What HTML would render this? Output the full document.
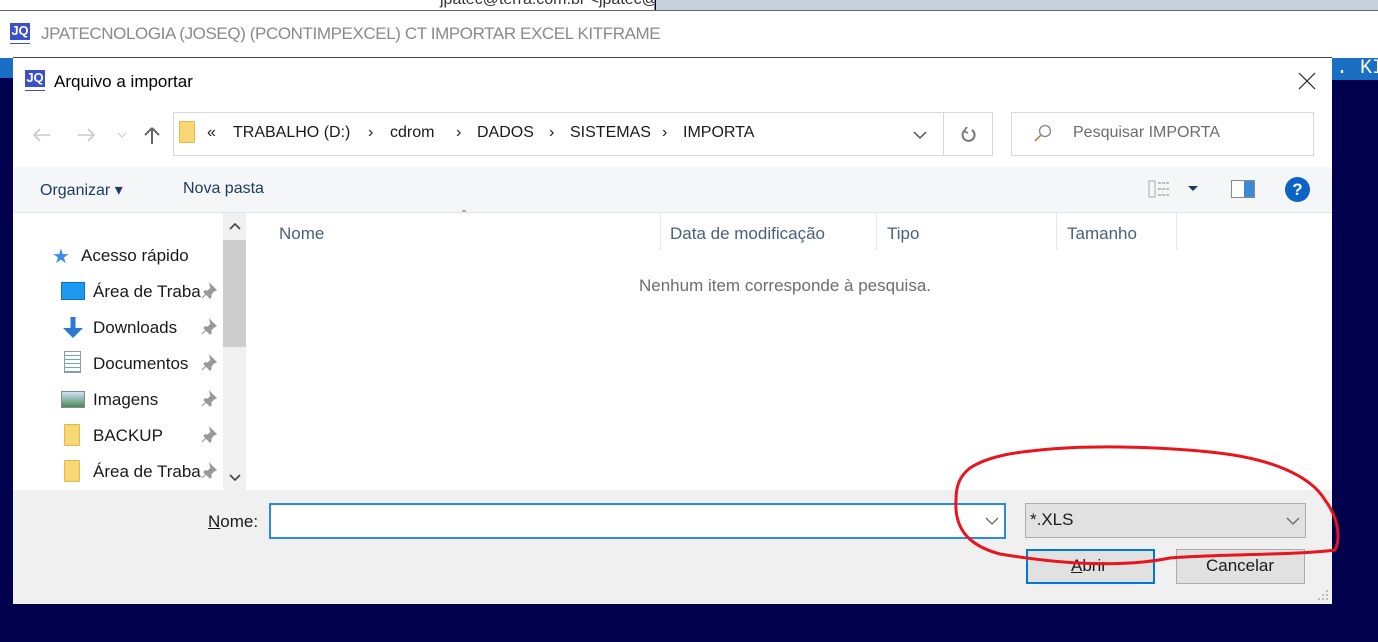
<!DOCTYPE html>
<html><head><meta charset="utf-8"><style>
*{margin:0;padding:0;box-sizing:border-box}
body{width:1378px;height:642px;overflow:hidden;background:#00004c;font-family:"Liberation Sans",sans-serif;position:relative;color:#000}
.a{position:absolute;white-space:nowrap}
.t{font-size:17px;color:#1a1a1a}
.b{position:absolute;top:124px;font-size:16px;color:#1a1a1a;white-space:nowrap}
.logo{position:absolute;width:20px;height:20px;background:#3b4fc8;color:#fff;font:bold 13px "Liberation Sans";text-align:center;line-height:16px;border-bottom:3px solid #fff;box-shadow:0 1px 0 #3b4fc8}
.fold{position:absolute;width:16px;height:22px;background:#f8d775;border:1px solid #e0b850;border-radius:1px}
</style></head><body>
<div class="a" style="left:0;top:0;width:655px;height:12px;background:#fff;border-right:1px solid #888;overflow:hidden"><div class="a" style="left:440px;top:-9px;font-size:16px;color:#333">jpatec@terra.com.br &lt;jpatec@terra.com.br&gt;</div></div>
<div class="a" style="left:656px;top:0;width:722px;height:10px;background:#c4d0dc"></div>
<div class="a" style="left:0;top:10px;width:1378px;height:48px;background:#fff;border-top:1px solid #666"></div>
<div class="logo" style="left:10px;top:23px">JQ</div>
<div class="a" style="left:41px;top:24px;font-size:17px;color:#8a8a8a;letter-spacing:-0.4px">JPATECNOLOGIA (JOSEQ) (PCONTIMPEXCEL) CT IMPORTAR EXCEL KITFRAME</div>
<div class="a" style="left:0;top:58px;width:13px;height:20px;background:#1a6fc4"></div>
<div class="a" style="left:1332px;top:58px;width:46px;height:22px;background:#1a6fc4;color:#fff;font:20px 'Liberation Mono';padding-left:4px;line-height:22px">. KI</div>
<div class="a" style="left:13px;top:57px;width:1319px;height:547px;background:#fff;border-top:1px solid #444"></div>
<div class="logo" style="left:25px;top:70px">JQ</div>
<div class="a t" style="left:54px;top:72px;color:#000">Arquivo a importar</div>
<svg class="a" style="left:1298px;top:72px" width="18" height="18"><path d="M1 1L17 17M17 1L1 17" stroke="#222" stroke-width="1.2"/></svg>
<svg class="a" style="left:30px;top:124px" width="140" height="22"><path d="M4 11h16M4 11l6-6M4 11l6 6" stroke="#c8c8c8" stroke-width="1.6" fill="none"/><path d="M48 11h16M64 11l-6-6M64 11l-6 6" stroke="#c8c8c8" stroke-width="1.6" fill="none"/><path d="M88 9l4 4 4-4" stroke="#c8c8c8" fill="none"/><path d="M122 4v16M122 4l-7 7M122 4l7 7" stroke="#666" stroke-width="2" fill="none"/></svg>
<div class="a" style="left:173px;top:112px;width:820px;height:44px;border:1px solid #d9d9d9"></div>
<div class="a" style="left:943px;top:112px;width:1px;height:44px;background:#d9d9d9"></div>
<div class="fold" style="left:179px;top:121px"></div>
<div class="b" style="left:207px">«</div>
<div class="b" style="left:233px">TRABALHO (D:)</div>
<div class="b" style="left:368px">›</div>
<div class="b" style="left:390px">cdrom</div>
<div class="b" style="left:456px">›</div>
<div class="b" style="left:477px">DADOS</div>
<div class="b" style="left:549px">›</div>
<div class="b" style="left:570px">SISTEMAS</div>
<div class="b" style="left:662px">›</div>
<div class="b" style="left:683px">IMPORTA</div>
<svg class="a" style="left:911px;top:128px" width="18" height="14"><path d="M3 4l6 6 6-6" stroke="#555" stroke-width="1.5" fill="none"/></svg>
<svg class="a" style="left:958px;top:124px" width="20" height="22"><path d="M14 6A6 6 0 1 1 6 7" stroke="#777" stroke-width="2" fill="none"/><path d="M9 3l-3 4 4 2" stroke="#777" stroke-width="1.8" fill="none"/></svg>
<div class="a" style="left:1011px;top:112px;width:303px;height:44px;border:1px solid #d9d9d9"></div>
<svg class="a" style="left:1032px;top:123px" width="22" height="22"><circle cx="13" cy="8" r="5.5" stroke="#888" stroke-width="1.3" fill="none"/><path d="M9 12l-6 6" stroke="#c08040" stroke-width="1.6"/></svg>
<div class="a" style="left:1073px;top:124px;font-size:16px;color:#6d6d6d">Pesquisar IMPORTA</div>
<div class="a" style="left:13px;top:167px;width:1319px;height:46px;background:#f5f6f7;border-bottom:1px solid #e5e5e5"></div>
<div class="a" style="left:40px;top:180px;font-size:16px;color:#1e3a5f">Organizar &#9662;</div>
<div class="a" style="left:183px;top:180px;font-size:16px;color:#1e3a5f">Nova pasta</div>
<svg class="a" style="left:1148px;top:179px" width="60" height="20"><rect x="1" y="2" width="6" height="16" fill="none" stroke="#aaa"/><path d="M10 4h12M10 10h12M10 16h12" stroke="#888" stroke-dasharray="3 1"/><path d="M40 7l5 5 5-5z" fill="#1e3a5f"/></svg>
<div class="a" style="left:1231px;top:180px;width:24px;height:18px;border:1px solid #888;background:linear-gradient(90deg,#fff 55%,#3a8ad8 55%)"></div>
<div class="a" style="left:1285px;top:177px;width:25px;height:25px;border-radius:50%;background:#0b63c4;color:#fff;font:bold 17px 'Liberation Sans';text-align:center;line-height:25px">?</div>
<div class="a" style="left:223px;top:213px;width:23px;height:277px;background:#f0f0f0"></div>
<div class="a" style="left:223px;top:240px;width:23px;height:107px;background:#cdcdcd"></div>
<svg class="a" style="left:228px;top:220px" width="14" height="12"><path d="M2 9l5-5 5 5" stroke="#444" stroke-width="1.6" fill="none"/></svg>
<svg class="a" style="left:228px;top:472px" width="14" height="12"><path d="M2 3l5 5 5-5" stroke="#444" stroke-width="1.6" fill="none"/></svg>
<div class="a" style="left:52px;top:244px;color:#3a8ee6;font-size:20px">★</div>
<div class="a t" style="left:81px;top:246px">Acesso rápido</div>
<div class="a" style="left:61px;top:282px;width:24px;height:18px;background:#1b9af0;border:1px solid #1070c0"></div>
<div class="a t" style="left:93px;top:282px">Área de Traba</div>
<svg class="a" style="left:61px;top:316px" width="24" height="24"><path d="M12 1v14" stroke="#2a78d0" stroke-width="5"/><path d="M2 12l10 10 10-10z" fill="#2a78d0"/></svg>
<div class="a t" style="left:93px;top:318px">Downloads</div>
<div class="a" style="left:64px;top:351px;width:17px;height:22px;border:1px solid #999;background-image:repeating-linear-gradient(#fff 0 3px,#6ab 3px 4px)"></div>
<div class="a t" style="left:93px;top:354px">Documentos</div>
<div class="a" style="left:61px;top:391px;width:24px;height:17px;border:1px solid #888;background:linear-gradient(#cfe3f5,#4a8a5a)"></div>
<div class="a t" style="left:93px;top:390px">Imagens</div>
<div class="fold" style="left:64px;top:424px"></div>
<div class="a t" style="left:93px;top:426px">BACKUP</div>
<div class="fold" style="left:64px;top:460px"></div>
<div class="a t" style="left:93px;top:462px">Área de Traba</div>
<svg class="a" style="left:200px;top:282px" width="18" height="200">
<g fill="#999" stroke="#999">
<path id="p" d="M10 2l6 6-2 1-3 3v3l-1 1-6-6 1-1h3l3-3zM6 12l-4 4" stroke-width="1.2"/>
<use href="#p" y="36"/><use href="#p" y="72"/><use href="#p" y="108"/><use href="#p" y="144"/><use href="#p" y="180"/>
</g></svg>
<div class="a" style="left:462px;top:207px;font-size:14px;color:#777">&#710;</div>
<div class="a t" style="left:279px;top:224px;color:#4c607a">Nome</div>
<div class="a" style="left:660px;top:213px;width:1px;height:37px;background:#e5e5e5"></div>
<div class="a t" style="left:670px;top:224px;color:#4c607a">Data de modificação</div>
<div class="a" style="left:876px;top:213px;width:1px;height:37px;background:#e5e5e5"></div>
<div class="a t" style="left:887px;top:224px;color:#4c607a">Tipo</div>
<div class="a" style="left:1056px;top:213px;width:1px;height:37px;background:#e5e5e5"></div>
<div class="a t" style="left:1067px;top:224px;color:#4c607a">Tamanho</div>
<div class="a" style="left:1176px;top:213px;width:1px;height:37px;background:#e5e5e5"></div>
<div class="a t" style="left:639px;top:276px;color:#6d6d6d">Nenhum item corresponde à pesquisa.</div>
<div class="a" style="left:13px;top:490px;width:1319px;height:114px;background:#f0f0f0"></div>
<div class="a t" style="left:208px;top:512px"><u>N</u>ome:</div>
<div class="a" style="left:269px;top:503px;width:737px;height:36px;background:#fff;border:2px solid #2a8ae0"></div>
<svg class="a" style="left:984px;top:515px" width="16" height="12"><path d="M2 3l6 6 6-6" stroke="#666" stroke-width="1.3" fill="none"/></svg>
<div class="a" style="left:1025px;top:503px;width:281px;height:35px;background:#e1e1e1;border:1px solid #adadad"></div>
<div class="a t" style="left:1030px;top:510px">*.XLS</div>
<svg class="a" style="left:1285px;top:515px" width="16" height="12"><path d="M2 3l6 6 6-6" stroke="#666" stroke-width="1.3" fill="none"/></svg>
<div class="a" style="left:1026px;top:549px;width:129px;height:35px;background:#e1e1e1;border:2px solid #0078d7"></div>
<div class="a t" style="left:1071px;top:556px"><u>A</u>brir</div>
<div class="a" style="left:1176px;top:549px;width:129px;height:35px;background:#e1e1e1;border:1px solid #adadad"></div>
<div class="a t" style="left:1206px;top:556px">Cancelar</div>
<svg class="a" style="left:1316px;top:588px" width="14" height="14"><g fill="#bbb"><rect x="10" y="2" width="2" height="2"/><rect x="6" y="6" width="2" height="2"/><rect x="10" y="6" width="2" height="2"/><rect x="2" y="10" width="2" height="2"/><rect x="6" y="10" width="2" height="2"/><rect x="10" y="10" width="2" height="2"/></g></svg>
<svg class="a" style="left:940px;top:440px" width="410" height="150"><path d="M30 28C50 15 80 12 100 10C160 4 230 8 270 12C330 18 370 35 385 60C400 80 400 100 395 110C360 115 280 114 230 118C180 128 120 124 60 114C30 106 14 90 16 60C16 45 20 36 30 28Z" stroke="#e8141e" stroke-width="3" fill="none"/></svg>
</body></html>
